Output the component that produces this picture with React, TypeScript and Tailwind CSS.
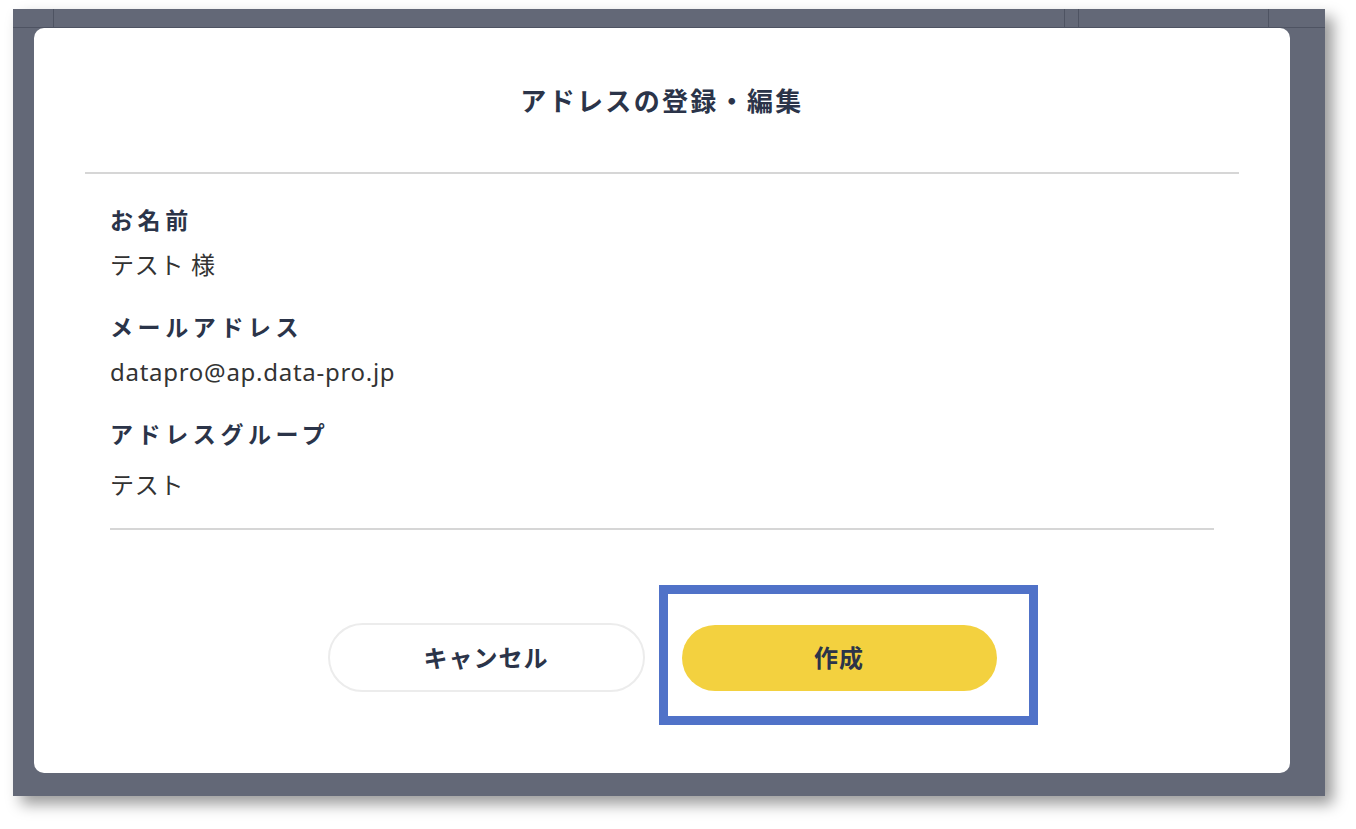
export default function App() {
  const fields = [
    { label: 'お名前', value: 'テスト 様' },
    { label: 'メールアドレス', value: 'datapro@ap.data-pro.jp' },
    { label: 'アドレスグループ', value: 'テスト' },
  ];
  const font = { fontFamily: '"Noto Sans", "Noto Sans CJK JP", sans-serif' };

  return (
    <div className="w-[1356px] h-[829px] bg-white pl-[13px] pt-[9px] overflow-hidden" style={font}>
      <div className="relative w-[1312px] h-[787px] bg-[#636877] shadow-[8px_8px_14px_rgba(0,0,0,0.4)] flex flex-col">
        {/* page behind the overlay */}
        <div className="h-[19px] flex border-b border-[#4e5362] shrink-0">
          <div className="w-[41px] border-r border-[#4e5362]" />
          <div className="w-[1011px] border-r border-[#4e5362]" />
          <div className="w-[14px] border-r border-[#4e5362]" />
          <div className="w-[190px] border-r border-[#4e5362]" />
        </div>

        {/* modal */}
        <div className="ml-[21px] w-[1256px] h-[745px] bg-white rounded-[10px] flex flex-col">
          <h2 className="pt-[55px] h-[91px] leading-[36px] text-center text-[26px] font-bold text-[#2b3449] tracking-[0.09em]">
            アドレスの登録・編集
          </h2>
          <div className="mt-[53px] mx-[51px] border-t-2 border-[#d6d6d6]" />

          <div className="mx-[76px] flex flex-col">
            {fields.map((f, i) => (
              <div key={f.label} className="pt-[30px]">
                <p className="leading-[32px] text-[23px] font-bold text-[#2b3449] tracking-[0.2em]">{f.label}</p>
                <p className={(i === 2 ? 'mt-[19px]' : 'mt-[13px]') + ' leading-[32px] text-[24px] text-[#333333] tracking-[0.03em]'}>{f.value}</p>
              </div>
            ))}
            <div className="mt-[27px] border-t-2 border-[#d6d6d6]" />
          </div>

          <div className="mt-[93px] flex items-center justify-center gap-[37px]">
            <button className="w-[317px] h-[69px] rounded-full bg-white border-2 border-[#ececec] text-[24px] font-bold text-[#2b3449] tracking-[0.04em]">
              キャンセル
            </button>
            <button className="w-[315px] h-[66px] rounded-full bg-[#f3d13f] text-[24px] font-bold text-[#2b3449] tracking-[0.04em]">
              作成
            </button>
          </div>
        </div>

        {/* annotation highlight */}
        <div className="absolute left-[646px] top-[576px] w-[379px] h-[140px] border-[9px] border-[#5072c8]" />
      </div>
    </div>
  );
}
